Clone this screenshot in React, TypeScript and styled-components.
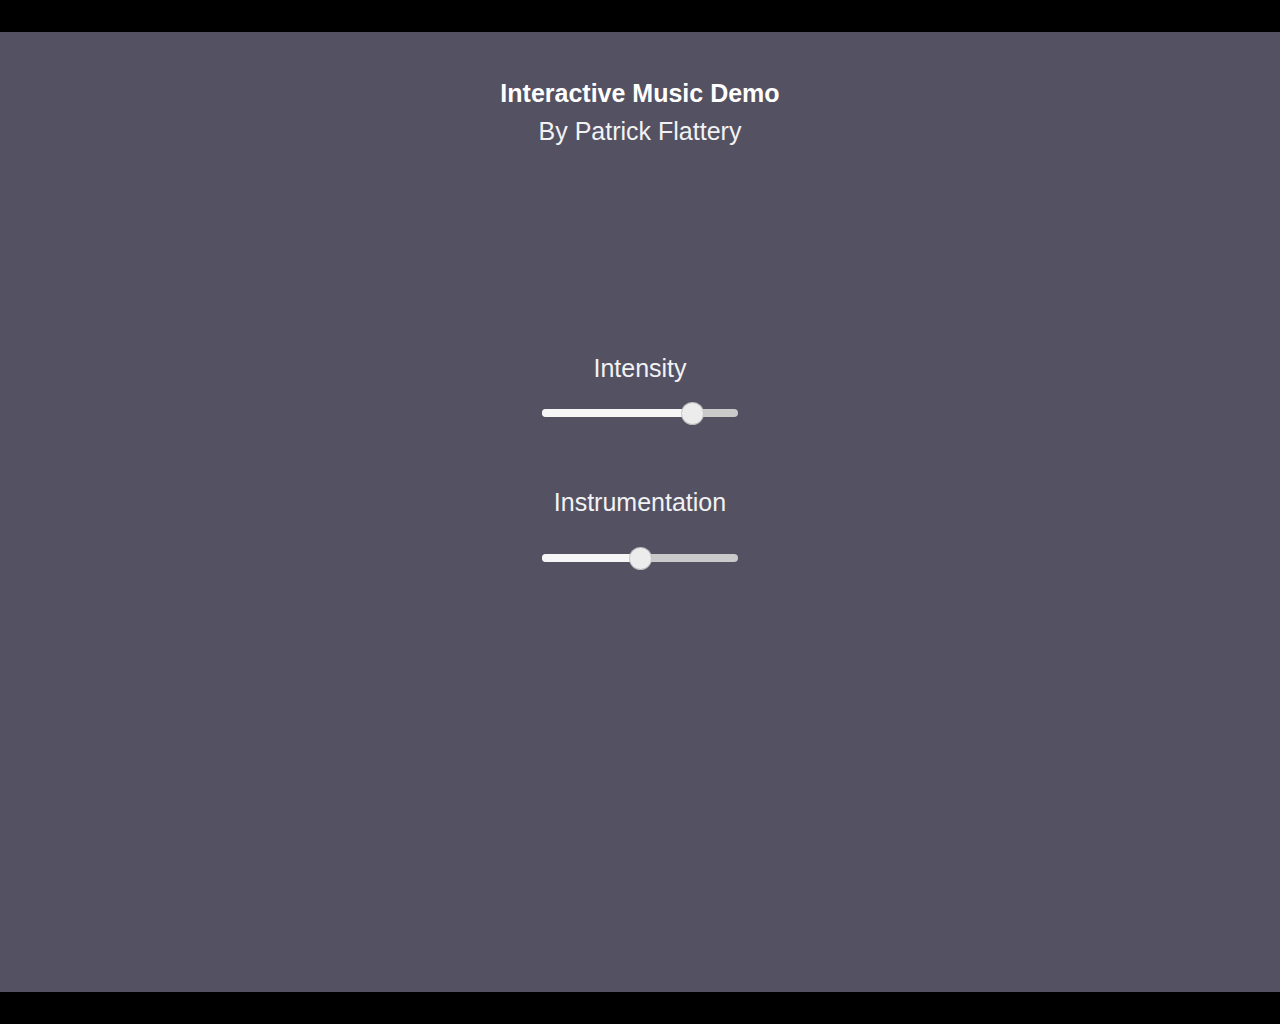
import React from 'react';
import styled, { createGlobalStyle } from 'styled-components';

const GlobalStyle = createGlobalStyle`
  html, body {
    margin: 0;
    padding: 0;
    background: #000;
  }
  body {
    font-family: 'Liberation Sans', Arial, Helvetica, sans-serif;
    -webkit-font-smoothing: antialiased;
  }
`;

const Page = styled.div`
  width: 1280px;
  height: 1024px;
  padding: 32px 0;
  box-sizing: border-box;
  background: #000;
`;

const Stage = styled.main`
  height: 960px;
  background: #545162;
  display: flex;
  flex-direction: column;
  align-items: center;
  padding-top: 42px;
  box-sizing: border-box;
`;

const Title = styled.h1`
  margin: 0;
  font-size: 25px;
  line-height: 38px;
  font-weight: 700;
  color: #fff;
`;

const Byline = styled.p`
  margin: 0;
  font-size: 25px;
  line-height: 38px;
  color: #f2f2f4;
`;

const Control = styled.section<{ $top: number }>`
  margin-top: ${({ $top }) => $top}px;
  display: flex;
  flex-direction: column;
  align-items: center;
`;

const Label = styled.label`
  font-size: 25px;
  line-height: 30px;
  color: #f2f2f4;
`;

const Track = styled.div<{ $gap: number }>`
  position: relative;
  margin-top: ${({ $gap }) => $gap}px;
  width: 196px;
  height: 8px;
  border-radius: 4px;
  background: #cacaca;
`;

const Fill = styled.div`
  height: 100%;
  border-radius: 4px;
  background: #f6f6f6;
`;

// knob sits on top of the track, centred on the current value
const Knob = styled.div`
  position: absolute;
  top: 50%;
  width: 21px;
  height: 21px;
  margin: -10.5px 0 0 -10.5px;
  border-radius: 50%;
  background: #ececec;
  box-shadow: 0 0 0 1px rgba(200, 200, 200, 0.9);
`;

const KNOB = 20;
const TRACK = 196;

function Slider({ value, gap }: { value: number; gap: number }) {
  const x = KNOB / 2 + (TRACK - KNOB) * value;
  return (
    <Track $gap={gap}>
      <Fill style={{ width: x }} />
      <Knob style={{ left: x }} />
    </Track>
  );
}

export default function App() {
  return (
    <>
      <GlobalStyle />
      <Page>
        <Stage>
          <Title>Interactive Music Demo</Title>
          <Byline>By Patrick Flattery</Byline>
          <Control $top={203}>
            <Label>Intensity</Label>
            <Slider value={0.8} gap={26} />
          </Control>
          <Control $top={70}>
            <Label>Instrumentation</Label>
            <Slider value={0.5} gap={37} />
          </Control>
        </Stage>
      </Page>
    </>
  );
}
